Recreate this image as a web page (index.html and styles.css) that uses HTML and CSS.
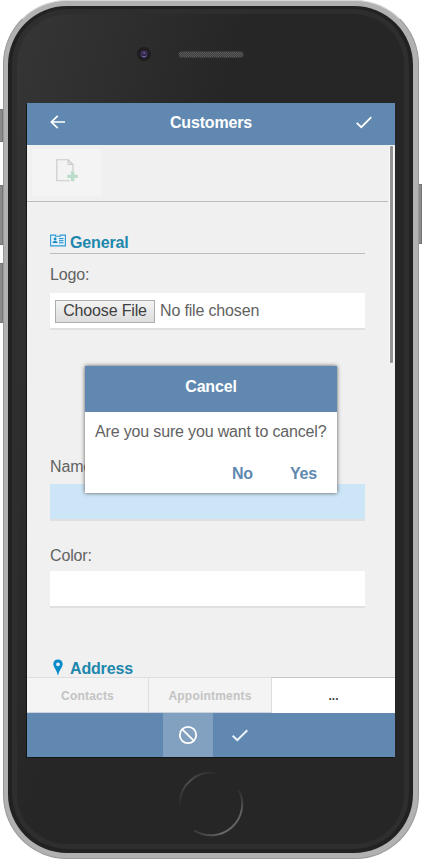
FILE: index.html
```html
<!DOCTYPE html>
<html lang="en">
<head>
<meta charset="utf-8">
<title>Customers</title>
<link rel="stylesheet" href="styles.css">
</head>
<body>
<div class="stage">
  <i class="side-key mute"></i><i class="side-key vol-up"></i><i class="side-key vol-down"></i><i class="side-key power"></i>
  <div class="phone">
    <div class="bezel">
      <div class="sensors">
        <svg class="camera" width="16" height="16" viewBox="0 0 16 16"><circle cx="8" cy="8" r="7" fill="#1d1d1e"/><circle cx="8" cy="8" r="4.6" fill="#20202a"/><circle cx="8" cy="8" r="3.5" fill="#43345f"/><circle cx="8" cy="8" r="1.8" fill="#211b36"/><circle cx="8.1" cy="7.2" r=".8" fill="#a799bb"/><path d="M6 10.3q2 1.3 4 0" stroke="#7d6aa0" fill="none"/></svg>
        <i class="speaker"></i>
      </div>
      <main class="screen">
        <header class="topbar">
          <svg class="back" width="16" height="14" viewBox="0 0 16 14"><path d="M15 7H1.5M7.7.8 1.4 7l6.3 6.2" fill="none" stroke="#fff" stroke-width="1.7"/></svg>
          <h1>Customers</h1>
          <svg class="done" width="16" height="13" viewBox="0 0 16 13"><path d="M.7 6.8 5.3 11.2 15.3 1.2" fill="none" stroke="#fff" stroke-width="1.8"/></svg>
        </header>
        <div class="content">
          <div class="toolbar">
            <div class="new-button">
              <svg width="24" height="25" viewBox="0 0 24 25"><path d="M14.5 22.8H1.8V1.7H13L18 6.5V13" fill="#f3f3f3" stroke="#c9c9c9" stroke-width="1.1"/><path d="M13 1.7V6.5H18Z" fill="#e4e4e4" stroke="#c9c9c9"/><path d="M17.6 13.2V23.3M12.3 18.4H22.7" stroke="#bcdccc" stroke-width="3.4"/></svg>
            </div>
          </div>
          <div class="form">
            <h2><svg class="card-icon" width="16" height="13" viewBox="0 0 16 13"><path d="M.6 1.1H5.6V2.3H10.2V1.1H15.4V11.9H.6Z" fill="#e4f1f8" stroke="#2e9bd1" stroke-width="1.1"/><circle cx="5.1" cy="5" r="1.4" fill="#168bc8"/><path d="M2.7 9V8L4.2 7H6L7.5 8V9Z" fill="#168bc8"/><path d="M9 4.6H13.5M9 6.7H13.5M9 8.8H13.5" stroke="#168bc8" stroke-width="1"/></svg><span>General</span></h2>
            <label class="logo-label"><span>Logo:</span></label>
            <div class="field file"><span class="choose">Choose File</span><span class="none">No file chosen</span></div>
            <label class="name-label"><span>Name:</span></label>
            <div class="field active"></div>
            <label class="color-label"><span>Color:</span></label>
            <div class="field"></div>
            <h2 class="address"><svg width="16" height="17" viewBox="0 0 16 17"><path fill="#078bca" fill-rule="evenodd" d="M8 .5C5 .5 3.3 2.6 3.3 5.1 3.3 8 6.7 11 7.7 16H8.3C9.3 11 12.7 8 12.7 5.1 12.7 2.6 11 .5 8 .5ZM8 3.4A1.9 1.9 0 1 1 8 7.2 1.9 1.9 0 0 1 8 3.4Z"/></svg><span>Address</span></h2>
          </div>
          <i class="scrollbar"></i>
        </div>
        <nav class="tabs"><div>Contacts</div><div>Appointments</div><div class="more">...</div></nav>
        <footer class="actions">
          <div class="cancel"><svg width="20" height="20" viewBox="0 0 20 20"><circle cx="10" cy="10" r="8.2" fill="none" stroke="#fff" stroke-width="1.8"/><path d="M4.3 4.3 15.7 15.7" stroke="#fff" stroke-width="1.8"/></svg></div>
          <div class="accept"><svg width="16" height="13" viewBox="0 0 16 13"><path d="M.7 6.8 5.3 11.2 15.3 1.2" fill="none" stroke="#eef5fa" stroke-width="2"/></svg></div>
        </footer>
        <section class="dialog">
          <h3>Cancel</h3>
          <p><span>Are you sure you want to cancel?</span></p>
          <div class="choices"><span>No</span><span>Yes</span></div>
        </section>
      </main>
      <svg class="home" width="68" height="68" viewBox="0 0 68 68">
        <defs>
          <linearGradient id="a" x1="0" y1="1" x2="1" y2="0"><stop offset="0" stop-color="#262626"/><stop offset=".5" stop-color="#505050"/><stop offset="1" stop-color="#262626"/></linearGradient>
          <linearGradient id="b" x1="0" y1="1" x2="1" y2="0"><stop offset="0" stop-color="#303030"/><stop offset=".3" stop-color="#6a6a6a"/><stop offset=".75" stop-color="#606060"/><stop offset="1" stop-color="#262626"/></linearGradient>
        </defs>
        <path d="M2.8 37A31.4 31.4 0 0 1 42 3.7" fill="none" stroke="url(#a)" stroke-width="2"/>
        <path d="M62 20A31.4 31.4 0 0 1 17 60.4" fill="none" stroke="url(#b)" stroke-width="2"/>
      </svg>
    </div>
  </div>
</div>
</body>
</html>
```
FILE: styles.css
```css
* { box-sizing: border-box; }
body { margin: 0; background: #fff; font-family: "Liberation Sans", Arial, sans-serif; color: #626262; letter-spacing: -.16px; }
h1, h2, h3, p { margin: 0; }
svg { display: block; flex: none; }
.stage { position: relative; width: 422px; height: 859px; overflow: hidden; padding: 0 3px; }
.side-key { position: absolute; width: 4px; background: #8b8b8e; border: 1px solid #77777a; }
.mute { left: -1px; top: 109px; height: 33px; }
.vol-up { left: -1px; top: 185px; height: 60px; }
.vol-down { left: -1px; top: 263px; height: 60px; }
.power { right: 0; top: 184px; height: 60px; }
.phone { position: relative; height: 859px; padding: 5px 5px 5px 4px; border: 1px solid #999; border-top-color: #d5d8d5; border-radius: 64px; background: #b1b1b1; }
.bezel { height: 847px; border: 4px solid #222; border-top-width: 3px; border-radius: 59px; background: linear-gradient(105deg, #363636 0, #262626 38%, #262626 100%); box-shadow: inset 0 0 0 5px #2e2e2e; display: flex; flex-direction: column; padding: 0 15px; }
.sensors { height: 94px; display: flex; align-items: center; padding: 0 0 4px 109px; gap: 26px; }
.speaker { width: 66px; height: 7px; border-radius: 4px; background: repeating-conic-gradient(#5b5b5b 0 25%, #3d3d3d 0 50%) 0 0 / 2px 2px; border: 1px solid #3a3a3a; }
.screen { position: relative; width: 368px; height: 654px; background: #f0f0f0; display: flex; flex-direction: column; flex: none; box-shadow: -1px 1px #151515; }
.topbar { height: 42px; flex: none; background: #6088b0; display: flex; align-items: center; padding: 0 23px; justify-content: space-between; color: #fff; }
.topbar h1 { font-size: 16px; line-height: 18px; margin-bottom: 2px; }
.topbar svg { margin-bottom: 4px; }
.content { flex: 1; min-height: 0; overflow: hidden; position: relative; }
.toolbar { height: 57px; width: 361px; border-bottom: 1px solid #bdbdbd; padding: 4px 5px; }
.new-button { width: 69px; height: 47px; background: #f4f4f4; padding: 9px 0 0 23px; }
.form { width: 361px; padding: 29px 23px 0; }
h2 { height: 23px; border-bottom: 1px solid #bdbdbd; font-size: 16px; line-height: 23px; color: #1d87ad; display: flex; gap: 4px; }
h2 .card-icon { margin-top: 3px; }
label { display: block; font-size: 16px; line-height: 18px; }
label span { position: relative; top: 1px; }
.logo-label { margin-top: 11px; }
.field { height: 37px; background: #fff; border-bottom: 2px solid #e0e0e0; }
.file { margin-top: 10px; display: flex; align-items: center; padding-left: 5px; font-size: 16px; }
.choose { width: 100px; height: 23px; margin-top: 1px; border: 1px solid #adadad; background: linear-gradient(#f3f3f3, #ddd); color: #404040; text-align: center; line-height: 20px; }
.none { margin-left: 5px; line-height: 20px; margin-top: 1px; }
.name-label { margin-top: 127px; }
.active { margin-top: 9px; background: #cce5f7; }
.color-label { margin-top: 25px; }
.color-label + .field { margin-top: 7px; }
.address { margin-top: 49px; }
.address svg { margin-top: 2px; }
.scrollbar { position: absolute; right: 1px; top: 0; width: 5px; height: 219px; background: #929292; border: 1px solid #f8f8f8; border-radius: 2px; }
.tabs { height: 36px; flex: none; display: grid; grid-template-columns: 121px 123px 124px; border-top: 1px solid #dedede; border-bottom: 1px solid #cdd5dc; background: #f4f4f4; font: bold 12px/37px "Liberation Sans", Arial, sans-serif; letter-spacing: .2px; color: #c3c3c3; text-align: center; }
.tabs div + div { border-left: 1px solid #dedede; }
.tabs .more { color: #444; background: #fff; box-shadow: 0 -1px #c7c7c7; letter-spacing: 0; }
.actions { height: 44px; flex: none; background: #6088b0; display: flex; padding-left: 136px; }
.actions div { display: flex; align-items: center; justify-content: center; }
.cancel { width: 50px; background: #82a1c0; }
.accept { width: 54px; }
.dialog { position: absolute; left: 58px; top: 263px; width: 252px; height: 127px; background: #fff; box-shadow: 0 0 4px #555; }
.dialog h3 { height: 46px; background: #6088b0; color: #fff; text-align: center; font-size: 16px; line-height: 41px; }
.dialog p { padding-left: 10px; font-size: 16px; line-height: 18px; margin-top: 11px; white-space: nowrap; }
.choices { display: flex; justify-content: flex-end; gap: 37px; padding-right: 20px; margin-top: 24px; color: #6088b0; font-size: 16px; line-height: 18px; font-weight: bold; }
.home { margin: 13px 0 0 150px; }
```
